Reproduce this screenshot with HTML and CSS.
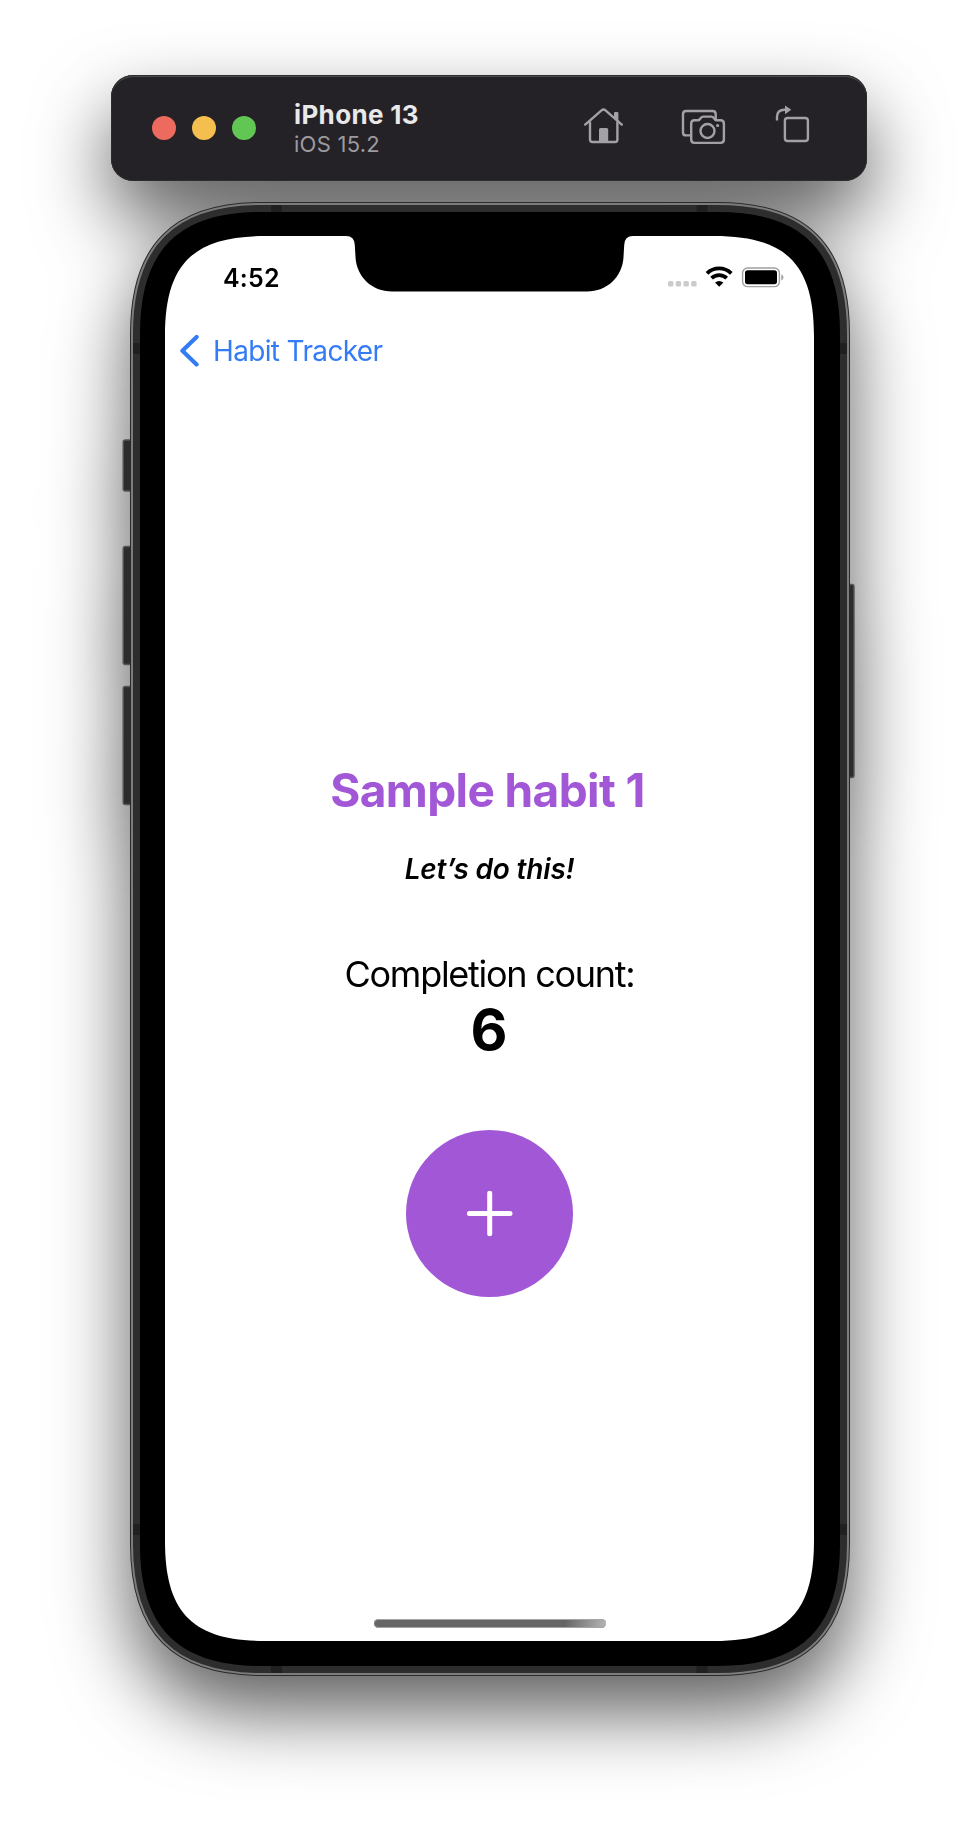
FILE: index.html
```html
<!DOCTYPE html>
<html lang="en">
<head>
<meta charset="utf-8">
<title>iPhone 13 – Habit Tracker</title>
<link rel="stylesheet" href="styles.css">
</head>
<body>
<div class="simulator">
  <header class="toolbar">
    <div class="lights">
      <span class="light light-close"></span>
      <span class="light light-min"></span>
      <span class="light light-max"></span>
    </div>
    <div class="device">
      <div class="device-name">iPhone 13</div>
      <div class="device-os">iOS 15.2</div>
    </div>
    <div class="tools">
      <svg width="52" height="44" viewBox="580 104 52 44">
        <path d="M585.2 124.6 L601.5 110.4 Q603.5 108.8 605.5 110.4 L621.8 124.6" stroke-linecap="round"/>
        <path d="M590 121.5 V139.5 Q590 142 592.5 142 H615 Q617.4 142 617.4 139.5 V121.5"/>
        <path class="solid" d="M599 142 V129.5 Q599 128 600.5 128 H606.7 Q608.2 128 608.2 129.5 V142 Z"/>
        <path class="solid" d="M614 118 V113 Q614 112 615 112 H617.4 Q618.4 112 618.4 113 V121.5 Z"/>
      </svg>
      <svg width="52" height="44" viewBox="676 104 52 44">
        <path d="M690 135.4 H686 Q683 135.4 683 132.4 V114.2 Q683 111 686.2 111 H712.5 Q715.7 111 715.7 114.2 V119"/>
        <path d="M694.5 120.3 H697.5 Q699.2 120.3 700 119 L701 117.7 Q701.8 116.6 703.3 116.6 H711.3 Q712.8 116.6 713.6 117.7 L714.6 119 Q715.4 120.3 717 120.3 H720.5 Q723.9 120.3 723.9 123.7 V139.6 Q723.9 142.9 720.5 142.9 H694.5 Q691.2 142.9 691.2 139.6 V123.7 Q691.2 120.3 694.5 120.3 Z"/>
        <circle cx="707.5" cy="131" r="7"/>
        <circle class="solid" cx="717.6" cy="125.5" r="1.6"/>
      </svg>
      <svg width="40" height="44" viewBox="772 104 40 44">
        <rect x="784.9" y="118" width="23" height="23" rx="2.8"/>
        <path d="M777 120.5 V117 Q777 109.7 784.5 109.7 H786"/>
        <path class="solid" d="M785 105.4 L791.3 109.7 L785 114.2 Z"/>
      </svg>
    </div>
  </header>

  <div class="phone">
    <svg class="chassis" width="737" height="1474" viewBox="121 202 737 1474">
      <g class="side-buttons">
        <rect x="123.2" y="440" width="9" height="51" rx="2"/>
        <rect x="123.2" y="546.5" width="9" height="118" rx="2"/>
        <rect x="123.2" y="686.5" width="9" height="118" rx="2"/>
        <rect x="846" y="584.5" width="8" height="193" rx="2"/>
      </g>
      <defs>
        <path id="body" d="M262 212 H718 C802 212 840 250 840 334 V1544 C840 1628 802 1666 718 1666 H262 C178 1666 140 1628 140 1544 V334 C140 250 178 212 262 212 Z"/>
      </defs>
      <use href="#body" class="rim-edge"/>
      <use href="#body" class="rim-shine"/>
      <use href="#body" class="rim-band"/>
      <g class="antenna">
        <rect x="271" y="205" width="11" height="8"/>
        <rect x="696.5" y="205" width="11" height="8"/>
        <rect x="271" y="1665" width="11" height="8"/>
        <rect x="696.5" y="1665" width="11" height="8"/>
        <rect x="133" y="343" width="8" height="11"/>
        <rect x="839" y="343" width="8" height="11"/>
        <rect x="133" y="1524" width="8" height="11"/>
        <rect x="839" y="1524" width="8" height="11"/>
      </g>
      <use href="#body" class="bezel"/>
      <path class="display" d="M265 236 H346 Q354.5 236 354.8 245 L355.5 257 C356.5 277 372 291.5 392 291.5 H587 C607 291.5 622.5 277 623.5 257 L624.2 245 Q624.5 236 633 236 H714 C786 236 814 264 814 336 V1541 C814 1613 786 1641 714 1641 H265 C193 1641 165 1613 165 1541 V336 C165 264 193 236 265 236 Z"/>
    </svg>

    <div class="screen">
      <div class="status">
        <span class="time">4:52</span>
        <svg class="indicators" width="118" height="26" viewBox="667 264 118 26">
          <g fill="#cbcbcb">
            <rect x="668" y="281" width="5.4" height="5.6" rx="1.5"/>
            <rect x="675.7" y="281" width="5.4" height="5.6" rx="1.5"/>
            <rect x="683.5" y="281" width="5.4" height="5.6" rx="1.5"/>
            <rect x="691.2" y="281" width="5.4" height="5.6" rx="1.5"/>
          </g>
          <g fill="none" stroke="#000" stroke-width="3.8">
            <path d="M707 273.4 A17.3 17.3 0 0 1 731.3 273.4"/>
            <path d="M711.6 278.2 A10.8 10.8 0 0 1 726.7 278.2"/>
          </g>
          <path d="M719.2 286.7 L715 282.5 Q719.2 279.3 723.4 282.5 Z"/>
          <rect x="742.6" y="268" width="36.8" height="18.6" rx="5" fill="none" stroke="#a0a0a0" stroke-width="1.4"/>
          <rect x="745" y="270.3" width="32" height="13.9" rx="2.6"/>
          <path d="M781.3 274.2 Q783.4 275 783.4 277.3 Q783.4 279.5 781.3 280.4 Z" fill="#a0a0a0"/>
        </svg>
      </div>

      <nav class="nav">
        <svg width="20" height="34" viewBox="0 0 20 34">
          <path d="M17.6 3 L3.4 16.7 L17.6 30.4" fill="none" stroke="#347cf6" stroke-width="4.2" stroke-linecap="round" stroke-linejoin="round"/>
        </svg>
        <span class="back">Habit Tracker</span>
      </nav>

      <main class="habit">
        <h1 class="title">Sample habit 1</h1>
        <p class="note">Let’s do this!</p>
        <p class="label">Completion count:</p>
        <p class="count">6</p>
        <button class="add" aria-label="Add">
          <svg width="46" height="46" viewBox="0 0 46 46">
            <path d="M22.7 2.2 V42.8 M2.4 22.5 H43" stroke="#fff" stroke-width="5" stroke-linecap="round"/>
          </svg>
        </button>
      </main>
      <div class="home-bar"></div>
    </div>
  </div>
</div>
</body>
</html>
```
FILE: styles.css
```css
* { box-sizing: border-box; }

body {
  margin: 0;
  width: 978px;
  height: 1826px;
  overflow: hidden;
  background: #fff;
  font-family: Inter, "Liberation Sans", sans-serif;
  color: #000;
}

.simulator {
  display: flex;
  flex-direction: column;
  gap: 21px;
  padding: 75px 111px 0;
  filter: drop-shadow(0 36px 38px rgba(0, 0, 0, 0.63));
}

.toolbar {
  display: flex;
  align-items: center;
  width: 756px;
  height: 106px;
  padding: 0 55px 0 41px;
  border-radius: 22px;
  background: #242227;
  box-shadow: inset 0 0 0 1px #2b2d2d, inset 0 2px 0 #4a4c4c;
}

.lights { display: flex; gap: 16px; }
.light { width: 24px; height: 24px; border-radius: 50%; }
.light-close { background: #ed6a5e; }
.light-min { background: #f5bf4f; }
.light-max { background: #62c655; }

.device { margin: 2px 0 0 38px; white-space: nowrap; }
.device-name { padding-top: 1px; font-size: 26px; line-height: 30px; font-weight: 700; color: #e9e9ea; letter-spacing: 0.35px; }
.device-os { font-size: 22px; line-height: 29px; color: #9c9a9f; letter-spacing: 0.25px; }

.tools { display: flex; gap: 44px; margin: -4px 0 0 auto; }
.tools svg { fill: none; stroke: #a3a1a6; stroke-width: 2.4; }
.tools .solid { fill: #a3a1a6; stroke: none; }

.phone { position: relative; width: 756px; height: 1474px; padding: 34px 53px 35px 54px; }
.chassis { position: absolute; left: 10px; top: 0; overflow: visible; }
.side-buttons { fill: #2c2c2c; stroke: #555; stroke-width: 1.4; }
.rim-edge { fill: none; stroke: #2a2a2a; stroke-width: 20; }
.rim-shine { fill: none; stroke: #7b7c7d; stroke-width: 18; }
.rim-band { fill: none; stroke: #2d2d2d; stroke-width: 14; }
.antenna { fill: #202020; }
.bezel { fill: #000; }
.display { fill: #fff; }

.screen { position: relative; display: flex; flex-direction: column; height: 1405px; }

.status {
  display: flex;
  align-items: center;
  justify-content: space-between;
  height: 83px;
  padding: 0 29px 0 58px;
}
.time { font-size: 25px; font-weight: 600; letter-spacing: 0.2px; }
.indicators { margin-top: -1px; }

.nav { display: flex; align-items: center; gap: 14px; height: 64px; padding-left: 14px; }
.back { font-size: 28px; color: #347cf6; white-space: nowrap; letter-spacing: -0.65px; }

.habit { display: flex; flex-direction: column; align-items: center; padding-top: 377px; white-space: nowrap; }
.habit > * { margin: 0; }
.title { padding-right: 4px; font-size: 46px; line-height: 60px; font-weight: 700; color: #a257d7; letter-spacing: -0.6px; }
.note { padding-top: 29px; font-size: 28px; line-height: 40px; font-weight: 600; font-style: italic; letter-spacing: -0.2px; }
.label { padding-top: 63px; font-size: 36px; line-height: 44px; letter-spacing: -1.27px; }
.count { padding: 1px 1px 0 0; font-size: 57px; line-height: 66px; font-weight: 700; }
.add {
  display: grid;
  place-items: center;
  width: 167px;
  height: 167px;
  padding: 0;
  border: 0;
  border-radius: 50%;
  background: #a257d7;
}
.habit .add { margin-top: 67px; }

.home-bar {
  width: 232px;
  height: 9px;
  margin: auto auto 13px;
  border-radius: 5px;
  background: linear-gradient(100deg, #666 0%, #666 82%, #b5b5b5 100%);
  box-shadow: inset 0 1px 0 #a5a5a5, inset 0 -1px 0 #a5a5a5;
}
```
